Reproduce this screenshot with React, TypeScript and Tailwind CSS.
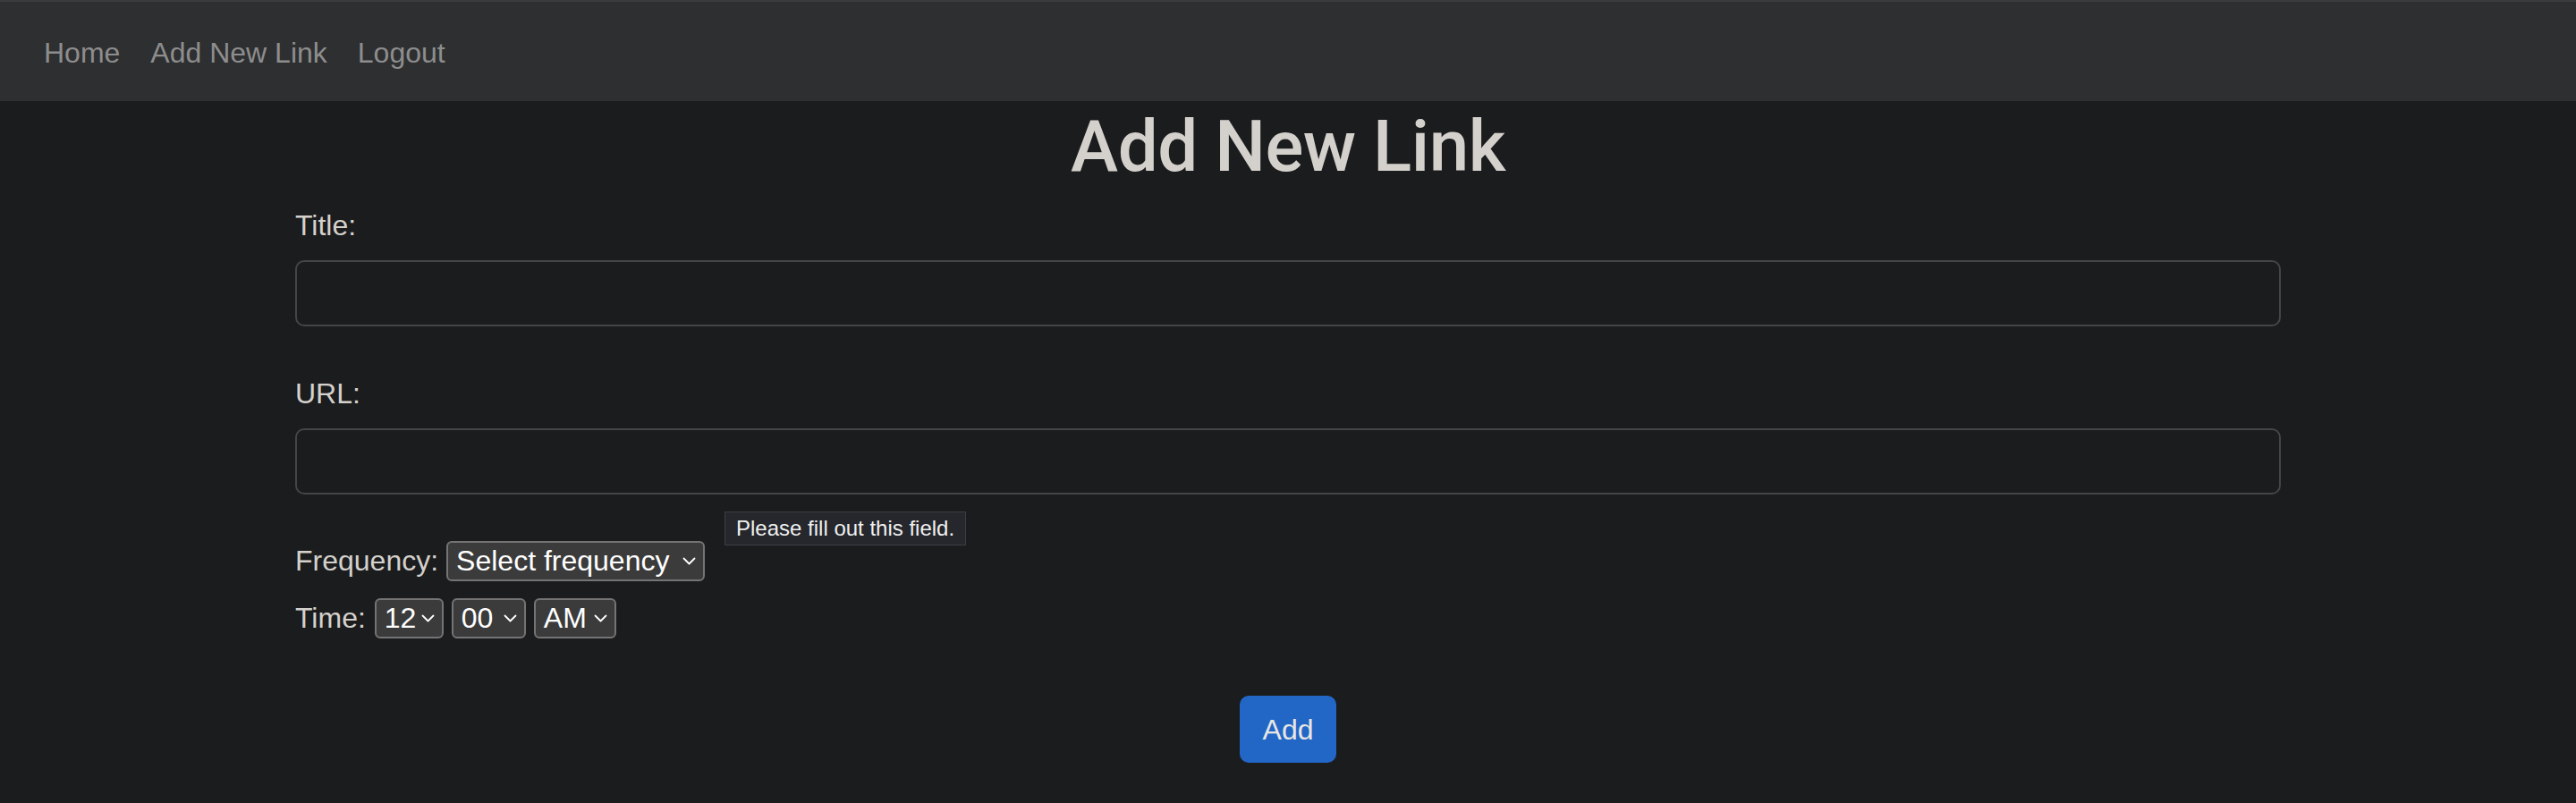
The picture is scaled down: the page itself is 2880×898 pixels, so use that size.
import React from 'react';

const Chevron: React.FC = () => (
  <svg width="15" height="9" viewBox="0 0 15 9" fill="none" className="shrink-0">
    <path d="M1.5 1.5 L7.5 7.5 L13.5 1.5" stroke="#ffffff" strokeWidth="1.8" strokeLinecap="round" strokeLinejoin="round" />
  </svg>
);

const FakeSelect: React.FC<{ value: string; width: string }> = ({ value, width }) => (
  <div
    className={`${width} h-[45px] flex items-center justify-between pl-[9px] pr-[8px] bg-[#3b3b3b] border-2 border-[#747474] rounded-[6px] text-white text-[32px] leading-none`}
  >
    <span>{value}</span>
    <Chevron />
  </div>
);

const App: React.FC = () => {
  const navLinks = ['Home', 'Add New Link', 'Logout'];

  return (
    <div className="relative min-h-screen bg-[#1b1c1e] font-['Liberation_Sans',Arial,sans-serif]">
      {/* navbar */}
      <nav className="h-[113px] bg-[#2e2f31] border-t-2 border-[#3b3c3e] flex items-center pt-[2px] pl-[49px] gap-[34px] text-[32px] leading-[48px] text-[#8d8d8d]">
        {navLinks.map((link) => (
          <a key={link} href="#" className="hover:text-[#bdbdbd]">
            {link}
          </a>
        ))}
      </nav>

      <h1 className="mt-[3px] text-center text-[80px] leading-[96px] font-medium font-['Roboto','Liberation_Sans',Arial,sans-serif] tracking-[-0.5px] text-[#d4d1cc]">
        Add New Link
      </h1>

      <form className="mx-[330px] flex flex-col text-[32px] leading-[48px] text-[#d4d1cc]">
        <label className="mt-[16px]">Title:</label>
        <input
          type="text"
          className="mt-[15px] h-[74px] w-full bg-[#1b1c1e] border-2 border-[#444547] rounded-[10px] outline-none"
        />

        <label className="mt-[51px]">URL:</label>
        <input
          type="text"
          className="mt-[15px] h-[74px] w-full bg-[#1b1c1e] border-2 border-[#444547] rounded-[10px] outline-none"
        />

        <div className="mt-[50px] h-[48px] flex items-center gap-[9px]">
          <span>Frequency:</span>
          <FakeSelect value="Select frequency" width="w-[289px]" />
        </div>

        <div className="mt-[16px] h-[48px] flex items-center gap-[9px]">
          <span className="mr-[1px]">Time:</span>
          <FakeSelect value="12" width="w-[77px]" />
          <FakeSelect value="00" width="w-[83px]" />
          <FakeSelect value="AM" width="w-[92px]" />
        </div>

        <div className="mt-[63px] flex justify-center">
          <button
            type="button"
            className="w-[108px] h-[75px] bg-[#2266c6] rounded-[10px] text-[32px] text-[#e8e6e3]"
          >
            Add
          </button>
        </div>
      </form>

      {/* browser validation bubble */}
      <div className="absolute left-[810px] top-[572px] w-[270px] h-[38px] flex items-center pl-[12px] bg-[#25272c] border border-[#3c3e43] text-[24px] leading-none text-[#f0f0f0]">
        Please fill out this field.
      </div>
    </div>
  );
};

export default App;
